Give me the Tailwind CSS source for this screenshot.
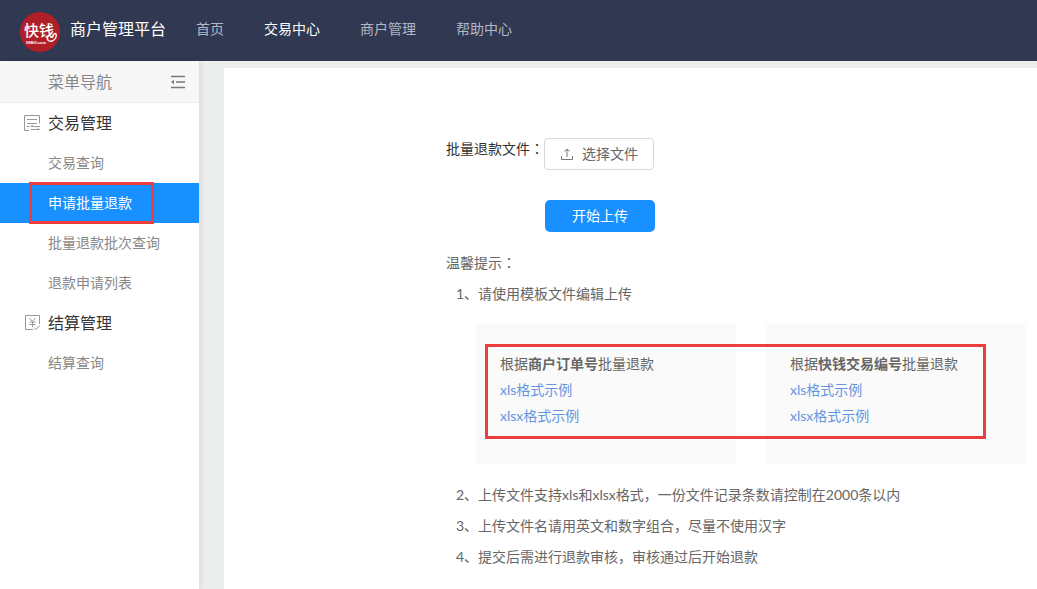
<!DOCTYPE html>
<html lang="zh-CN">
<head>
  <meta charset="UTF-8" />
  <meta name="viewport" content="width=device-width, initial-scale=1.0" />
  <title>商户管理平台</title>
  <script src="https://cdn.jsdelivr.net/npm/@tailwindcss/browser@4"></script>
</head>
<body class="min-h-screen flex flex-col bg-[#eceeee] text-sm text-[#666] font-['Lato','Noto_Sans_CJK_SC',sans-serif]">

  <!-- Header -->
  <header class="h-[61px] shrink-0 bg-[#303852] flex items-center pl-5">
    <svg class="w-10 h-10 mt-[2px]" viewBox="0 0 40 40" role="img" aria-label="快钱">
      <circle cx="20" cy="20" r="20" fill="#b01f28" />
      <text x="4" y="24" font-size="15" font-weight="500" fill="#fff" font-family="Noto Sans CJK SC, sans-serif">快钱</text>
      <text x="6" y="32" font-size="4" font-weight="700" fill="#fff" font-family="Liberation Sans, sans-serif">99Bill.com</text>
      <path d="M28 24c-2 4 1 6 4 5 3-1 5-4 4-7-1-1-3 0-3 2" fill="none" stroke="#fff" stroke-width="1.4" stroke-linecap="round" />
    </svg>
    <h1 class="ml-[10px] pb-1 text-base text-white whitespace-nowrap">商户管理平台</h1>
    <nav class="ml-[30px] pb-1">
      <ul class="flex gap-10 text-[#b3b7c3] whitespace-nowrap">
        <li><a href="#" class="hover:text-white">首页</a></li>
        <li><a href="#" class="text-white">交易中心</a></li>
        <li><a href="#" class="hover:text-white">商户管理</a></li>
        <li><a href="#" class="hover:text-white">帮助中心</a></li>
      </ul>
    </nav>
  </header>

  <div class="flex-1 flex">

    <!-- Sidebar -->
    <aside class="w-[199px] shrink-0 bg-white shadow-[1px_0_6px_rgba(0,0,0,0.1)] leading-10">
      <div class="h-[42px] pl-12 pr-[13px] flex items-center justify-between bg-[#f7f7f7] border-b border-[#ebebeb] text-base text-[#888]">
        <span>菜单导航</span>
        <button type="button" aria-label="收起菜单">
          <svg class="w-4 h-4" viewBox="0 0 16 16" fill="none" stroke="#777" stroke-width="1.3">
            <path d="M1 2.5h14M6 8h9M1 13.5h14" />
            <path d="M4 5.8v4.4L1 8z" fill="#777" stroke="none" />
          </svg>
        </button>
      </div>

      <h2 class="pl-6 flex items-center gap-2 text-base/10 text-[#333]">
        <svg class="w-4 h-4" viewBox="0 0 16 16" fill="none" stroke="#999" stroke-width="1">
          <path d="M.5 15.500V.5h15v8M3 4.500h10M3 8.500h10M.5 15.500H5M2.500 11.500h3M7 11.500h9M9 9.500l-2 2M7 14.500h8.500l-2-1.500" />
        </svg>
        交易管理
      </h2>
      <ul class="text-[#888]">
        <li><a href="#" class="block pl-12">交易查询</a></li>
        <li class="relative">
          <a href="#" class="block pl-12 bg-[#1890ff] text-white">申请批量退款</a>
          <span class="absolute left-[29px] right-[45px] -top-px -bottom-px border-3 border-[#ec3e3f] pointer-events-none"></span>
        </li>
        <li><a href="#" class="block pl-12">批量退款批次查询</a></li>
        <li><a href="#" class="block pl-12">退款申请列表</a></li>
      </ul>

      <h2 class="pl-6 flex items-center gap-2 text-base/10 text-[#333]">
        <svg class="w-4 h-4" viewBox="0 0 16 16" fill="none" stroke="#999" stroke-width="1">
          <path d="M15.500 9V.5H1.500v14H9M5.500 3l3 3.500 3-3.500M8.500 6.500V12M5.500 7h6M5.500 9.500h6M10 12.500l2 2 3.500-4" />
        </svg>
        结算管理
      </h2>
      <ul class="text-[#888]">
        <li><a href="#" class="block pl-12">结算查询</a></li>
      </ul>
    </aside>

    <!-- Batch refund -->
    <main class="flex-1 mt-[7px] ml-[25px] pt-[70px] pl-[222px] pr-[11px] bg-white">
      <form>
        <div class="flex items-start">
          <label for="chooseFile" class="leading-5 text-[#333] whitespace-nowrap">批量退款文件<span class="font-['Noto_Sans_CJK_TC',sans-serif]" lang="zh-TW">：</span></label>
          <button type="button" id="chooseFile" class="h-8 px-[15px] flex items-center gap-2 border border-[#d9d9d9] rounded whitespace-nowrap">
            <svg class="w-[14px] h-[14px]" viewBox="0 0 14 14" fill="none" stroke="#777" stroke-width="1">
              <path d="M1.500 9v3.500h11V9M7 10V2M4.500 4.500L7 2l2.500 2.500" />
            </svg>
            选择文件
          </button>
        </div>
        <button type="button" class="mt-[30px] ml-[99px] h-8 px-[27px] block rounded-[5px] bg-[#1890ff] text-white whitespace-nowrap">开始上传</button>
      </form>

      <section class="mt-[15px] leading-[31px]">
        <h3>温馨提示<span class="font-['Noto_Sans_CJK_TC',sans-serif]" lang="zh-TW">：</span></h3>
        <p class="pl-[10px]">1、请使用模板文件编辑上传</p>

        <!-- Template downloads -->
        <div class="relative my-[15px] ml-[30px] grid grid-cols-2 gap-[30px] leading-[26px]">
          <div class="h-[140px] pt-[27px] pl-6 bg-[#fafafa]">
            <p>根据<b>商户订单号</b>批量退款</p>
            <a href="#" class="block text-[#6495e0]">xls格式示例</a>
            <a href="#" class="block text-[#6495e0]">xlsx格式示例</a>
          </div>
          <div class="h-[140px] pt-[27px] pl-6 bg-[#fafafa]">
            <p>根据<b>快钱交易编号</b>批量退款</p>
            <a href="#" class="block text-[#6495e0]">xls格式示例</a>
            <a href="#" class="block text-[#6495e0]">xlsx格式示例</a>
          </div>
          <span class="absolute left-[9px] right-10 top-5 bottom-[25px] border-3 border-[#ec3e3f] pointer-events-none"></span>
        </div>

        <p class="pl-[10px]">2、上传文件支持xls和xlsx格式，一份文件记录条数请控制在2000条以内</p>
        <p class="pl-[10px]">3、上传文件名请用英文和数字组合，尽量不使用汉字</p>
        <p class="pl-[10px]">4、提交后需进行退款审核，审核通过后开始退款</p>
      </section>
    </main>
  </div>

</body>
</html>
